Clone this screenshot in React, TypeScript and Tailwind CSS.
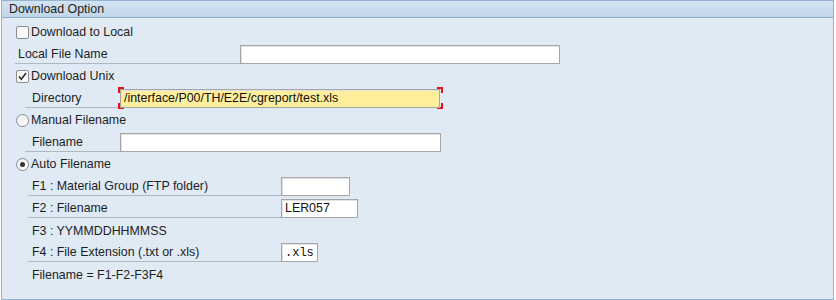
const Checkbox = ({ checked }: { checked?: boolean }) => (
  <span className="flex h-[13px] w-[13px] items-center justify-center rounded-[2px] border border-[#8c8c8c] bg-gradient-to-br from-[#f4f4f4] to-white">
    {checked && (
      <svg width="11" height="11" viewBox="0 0 11 11">
        <path d="M2 5.5 L4.3 8.2 L9 2" fill="none" stroke="#2b2b2b" strokeWidth="1.6" />
      </svg>
    )}
  </span>
);

const Radio = ({ checked }: { checked?: boolean }) => (
  <span className="flex h-[13px] w-[13px] items-center justify-center rounded-full border border-[#8c8c8c] bg-gradient-to-br from-[#ededed] to-white">
    {checked && <span className="h-[5px] w-[5px] rounded-full bg-[#333]" />}
  </span>
);

const Field = ({
  width,
  value,
  mono,
  yellow,
}: {
  width: string;
  value?: string;
  mono?: boolean;
  yellow?: boolean;
}) => (
  <div
    className={`flex h-[19px] items-center border border-[#a6a6a6] pl-[3px] pt-[1px] shadow-[inset_1px_1px_0_#e2e2e2] ${width} ${
      yellow ? "bg-[#ffef9d]" : "bg-white"
    } ${mono ? "font-['Liberation_Mono',monospace] text-[12px]" : ""} text-[#111]`}
  >
    {value}
  </div>
);

export default function App() {
  return (
    <div className="h-[300px] w-[836px] bg-white font-['Liberation_Sans',Arial,sans-serif] text-[12.4px] text-[#1e1e1e]">
      <div className="ml-[1px] flex h-[300px] w-[833px] flex-col border border-[#95b2d1] bg-[#dfeaf5]">
        {/* header */}
        <div className="flex h-[17px] items-center border-b border-[#8eabca] bg-gradient-to-b from-[#d4e3f2] to-[#c1d6eb] pl-[7px] pt-[1px] text-[#222]">
          Download Option
        </div>

        <div className="flex flex-col pt-[3px]">
          {/* Download to Local */}
          <div className="flex h-[22px] items-center gap-[2px] pl-[14px]">
            <Checkbox />
            <span className="pt-[1px]">Download to Local</span>
          </div>

          {/* Local File Name */}
          <div className="flex h-[22px] items-center pl-[13px]">
            <div className="flex h-[19px] w-[225px] items-center border-b border-[#adb8c4] pl-[3px] pt-[2px]">
              Local File Name
            </div>
            <Field width="w-[320px]" />
          </div>

          {/* Download Unix */}
          <div className="flex h-[22px] items-center gap-[2px] pl-[14px]">
            <Checkbox checked />
            <span className="pt-[1px]">Download Unix</span>
          </div>

          {/* Directory */}
          <div className="flex h-[22px] items-center pl-[23px]">
            <div className="flex h-[19px] w-[93px] items-center border-b border-[#adb8c4] pl-[7px] pt-[2px]">
              Directory
            </div>
            <div className="relative flex h-[22px] w-[325px] items-center px-[2px]">
              <span className="absolute left-0 top-0 h-[6px] w-[6px] border-l-2 border-t-2 border-[#e3101c]" />
              <span className="absolute bottom-0 left-0 h-[6px] w-[6px] border-b-2 border-l-2 border-[#e3101c]" />
              <span className="absolute right-0 top-0 h-[6px] w-[6px] border-r-2 border-t-2 border-[#e3101c]" />
              <span className="absolute bottom-0 right-0 h-[6px] w-[6px] border-b-2 border-r-2 border-[#e3101c]" />
              <div className="relative">
                <Field width="w-[320px]" value="/interface/P00/TH/E2E/cgreport/test.xls" yellow />
              </div>
            </div>
          </div>

          {/* Manual Filename */}
          <div className="flex h-[22px] items-center gap-[2px] pl-[14px]">
            <Radio />
            <span className="pt-[1px]">Manual Filename</span>
          </div>

          {/* Filename */}
          <div className="flex h-[22px] items-center pl-[23px]">
            <div className="flex h-[19px] w-[95px] items-center border-b border-[#adb8c4] pl-[7px] pt-[2px]">
              Filename
            </div>
            <Field width="w-[321px]" />
          </div>

          {/* Auto Filename */}
          <div className="flex h-[22px] items-center gap-[2px] pl-[14px]">
            <Radio checked />
            <span className="pt-[1px]">Auto Filename</span>
          </div>

          {/* F1 */}
          <div className="flex h-[22px] items-center pl-[26px]">
            <div className="flex h-[19px] w-[253px] items-center border-b border-[#adb8c4] pl-[4px] pt-[2px]">
              F1 : Material Group (FTP folder)
            </div>
            <Field width="w-[69px]" />
          </div>

          {/* F2 */}
          <div className="flex h-[22px] items-center pl-[26px]">
            <div className="flex h-[19px] w-[253px] items-center border-b border-[#adb8c4] pl-[4px] pt-[2px]">
              F2 : Filename
            </div>
            <Field width="w-[77px]" value="LER057" />
          </div>

          {/* F3 */}
          <div className="flex h-[22px] items-center pl-[30px] pt-[2px]">F3 : YYMMDDHHMMSS</div>

          {/* F4 */}
          <div className="flex h-[22px] items-center pl-[26px]">
            <div className="flex h-[19px] w-[253px] items-center border-b border-[#adb8c4] pl-[4px] pt-[2px]">
              F4 : File Extension (.txt or .xls)
            </div>
            <Field width="w-[37px]" value=".xls" mono />
          </div>

          {/* Result */}
          <div className="flex h-[22px] items-center pl-[30px] pt-[2px]">Filename = F1-F2-F3F4</div>
        </div>
      </div>
    </div>
  );
}
